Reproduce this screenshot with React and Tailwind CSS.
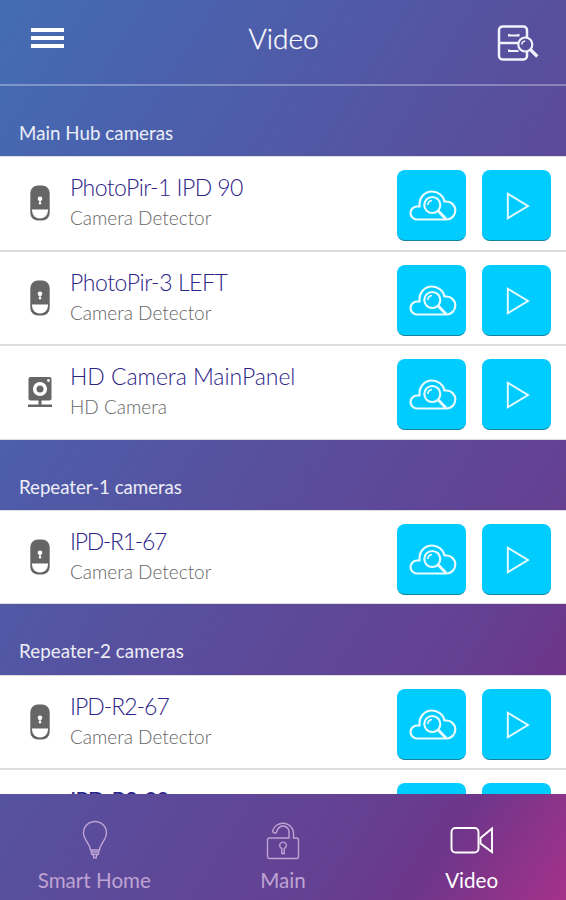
import React from 'react';

const sections = [
  {
    title: 'Main Hub cameras',
    titleClass: 'tracking-[0.06px]',
    cameras: [
      { name: 'PhotoPir-1 IPD 90', type: 'Camera Detector', icon: 'pir', nameClass: 'font-light tracking-[-0.55px]' },
      { name: 'PhotoPir-3 LEFT', type: 'Camera Detector', icon: 'pir', nameClass: 'font-light tracking-[-0.42px]' },
      { name: 'HD Camera MainPanel', type: 'HD Camera', icon: 'hd', nameClass: 'font-light tracking-[-0.06px]' },
    ],
  },
  {
    title: 'Repeater-1 cameras',
    titleClass: 'tracking-[-0.03px]',
    cameras: [{ name: 'IPD-R1-67', type: 'Camera Detector', icon: 'pir', nameClass: 'font-light tracking-[-1.3px]' }],
  },
  {
    title: 'Repeater-2 cameras',
    titleClass: 'tracking-[0.08px]',
    cameras: [
      { name: 'IPD-R2-67', type: 'Camera Detector', icon: 'pir', nameClass: 'font-light tracking-[-1px]' },
      { name: 'IPD-R2-90', type: 'Camera Detector', icon: 'pir', nameClass: 'font-normal tracking-[-1.2px]' },
    ],
  },
];

function PirIcon() {
  return (
    <svg className="w-5 h-9" viewBox="0 0 20 36">
      <rect x="0.3" y="0.5" width="19.400" height="35" rx="7.500" fill="#666" />
      <path d="M2 24.500h16v1a8 8 0 0 1-16 0z" fill="#fff" />
      <circle cx="10" cy="13.700" r="2.300" fill="#fff" />
      <path d="M9.300 14h1.400v3H9.300z" fill="#fff" />
      <circle cx="10" cy="18.200" r="1.200" fill="#fff" />
    </svg>
  );
}

function HdIcon() {
  return (
    <svg className="w-6 h-8" viewBox="0 0 24 32">
      <rect x="0.5" y="1" width="23" height="23.500" rx="2" fill="#666" />
      <circle cx="12" cy="13" r="5.300" fill="#666" stroke="#fff" strokeWidth="3.600" />
      <circle cx="20.500" cy="4.500" r="1.400" fill="#fff" />
      <path d="M10.500 24h3v4.500h-3zM0 28.500h24V31H0z" fill="#666" />
    </svg>
  );
}

function CloudSearchIcon() {
  return (
    <svg className="w-12 h-8 mt-[2px] ml-[3px]" viewBox="0 0 48 32" fill="none" stroke="#e9fbff" strokeWidth="2.200">
      <path d="M8 29.500H37.500a8.800 9 0 0 0 0-18h-2C34.300 5.500 29 1.500 23 1.500c-7.500 0-12.800 6-12.500 14v1H8a6.500 6.500 0 0 0 0 13z" />
      <circle cx="23.300" cy="15" r="8" />
      <path d="M18.800 15a4.800 4.800 0 0 1 4.200-4.500" strokeWidth="1.700" />
      <path d="M28.800 20.500l8.200 8.500" strokeWidth="3" />
    </svg>
  );
}

function PlayIcon() {
  return (
    <svg className="w-6 h-7 ml-[3px] mt-[2px]" viewBox="0 0 24 28" fill="none" stroke="#e9fbff" strokeWidth="1.900">
      <path d="M1.800 1.800v24.400L22 14z" />
    </svg>
  );
}

function ArchiveIcon() {
  return (
    <svg className="w-[42px] h-9" viewBox="0 0 42 36" fill="none" stroke="#f3f1fc" strokeWidth="2.500">
      <path d="M30 12V5a3.500 3.500 0 0 0-3.500-3.500h-21A3.500 3.500 0 0 0 2 5v26a3.500 3.500 0 0 0 3.500 3.500h21A3.500 3.500 0 0 0 30 31v-4.500M2 18h19" />
      <path d="M12 9v1.500h9.500V9M12 24.500V26h9.500" strokeWidth="2" />
      <circle cx="28.300" cy="19.500" r="7" strokeWidth="2.200" />
      <path d="M24.800 19.500a3.800 3.800 0 0 1 3.500-3.600" strokeWidth="1.500" />
      <path d="M33.300 24.500l7 7" strokeWidth="3.200" />
    </svg>
  );
}

function BulbIcon() {
  return (
    <svg className="w-[26px] h-10 ml-px" viewBox="0 0 26 40" fill="none" stroke="currentColor" strokeWidth="1.400">
      <path d="M8.500 30C8 23.500 1.500 20 1.500 12.800a11.500 11.300 0 0 1 23 0C24.500 20 18 23.500 17.500 30zM9 30l.700 4.300h6.600L17 30M10 34.300l1.700 1.500v2h2.600v-2l1.700-1.500M10 32h6" />
    </svg>
  );
}

function LockIcon() {
  return (
    <svg className="w-[34px] h-10" viewBox="0 0 34 40" fill="none" stroke="currentColor" strokeWidth="1.400">
      <path d="M27.500 18H30.500a2 2 0 0 1 2 2v16.500a2 2 0 0 1-2 2h-27a2 2 0 0 1-2-2V20a2 2 0 0 1 2-2h19.500v-6a6 6 0 0 0-11.300-2.700l-1 2.200a2 2 0 0 1-4-.8A10.700 10.700 0 0 1 27.500 12.300z" />
      <path d="M15.800 28.500a3.300 3.300 0 1 1 2.400 0v5h-2.400z" />
    </svg>
  );
}

function VideoIcon() {
  return (
    <svg className="w-11 h-10" viewBox="0 0 44 40" fill="none" stroke="currentColor" strokeWidth="1.900">
      <rect x="1.500" y="8" width="27" height="24.500" rx="4" />
      <path d="M30.500 18L42 8.500V32l-11.500-8.500z" />
    </svg>
  );
}

function ActionButton({ children }) {
  return (
    <button className="w-[69px] h-[71px] rounded-lg bg-[#00ccff] border-b border-[#1583a0] flex items-center justify-center">
      {children}
    </button>
  );
}

function CameraRow({ camera }) {
  return (
    <div className="h-[94.5px] bg-white flex items-start pr-[15px] pt-[14px] shadow-[inset_0_1px_0_#dedede,inset_0_-1px_0_#dedede]">
      <div className="w-[70px] pl-[9px] pt-[15px] flex justify-center">
        {camera.icon === 'pir' ? <PirIcon /> : <div className="pt-[2px]"><HdIcon /></div>}
      </div>
      <div className="flex-1 pt-[2px] whitespace-nowrap">
        <div className={`text-[23px] leading-[30px] text-[#2c2387] ${camera.nameClass}`}>{camera.name}</div>
        <div className="text-[19px] leading-[30px] mt-px font-light text-[#666]">{camera.type}</div>
      </div>
      <div className="flex gap-4">
        <ActionButton><CloudSearchIcon /></ActionButton>
        <ActionButton><PlayIcon /></ActionButton>
      </div>
    </div>
  );
}

const tabs = [
  { label: 'Smart Home', icon: <BulbIcon />, active: false },
  { label: 'Main', icon: <LockIcon />, active: false },
  { label: 'Video', icon: <VideoIcon />, active: true },
];

export default function App() {
  return (
    <div className="w-[566px] h-[900px] overflow-hidden flex flex-col font-['Lato',sans-serif] bg-[linear-gradient(to_bottom_right,#436db3_0%,#4963ae_15%,#4f5ba8_30%,#584f9d_50%,#654092_77%,#6c368a_86%,#a5318a_100%)]">
      <header className="h-[86px] shrink-0 border-b-2 border-white/30 flex items-start justify-between pl-[31px] pr-[27px]">
        <button className="w-[33px] mt-[28px] flex flex-col gap-1">
          <span className="h-1 w-full bg-white" />
          <span className="h-1 w-full bg-white" />
          <span className="h-1 w-full bg-white" />
        </button>
        <h1 className="text-[28px] leading-9 mt-[20px] ml-[6px] font-light text-white [-webkit-text-stroke:0.3px_white]">Video</h1>
        <button className="mt-[25px]"><ArchiveIcon /></button>
      </header>

      <main className="flex-1 min-h-0 overflow-hidden">
        {sections.map((section) => (
          <section key={section.title}>
            <h2 className="h-[70.2px] pl-[19px] pt-[35px] text-[18.700px] leading-6 text-white/90">
              <span className={section.titleClass}>{section.title}</span>
            </h2>
            <div>
              {section.cameras.map((camera) => (
                <CameraRow key={camera.name} camera={camera} />
              ))}
            </div>
          </section>
        ))}
      </main>

      <nav className="h-[106px] shrink-0 grid grid-cols-3">
        {tabs.map((tab) => (
          <div key={tab.label} className={tab.active ? 'flex flex-col items-center pt-[26px] text-white' : 'flex flex-col items-center pt-[26px] text-[#bfa3d3]'}>
            {tab.icon}
            <span className="text-[20.600px] leading-7 mt-[6px]">{tab.label}</span>
          </div>
        ))}
      </nav>
    </div>
  );
}
